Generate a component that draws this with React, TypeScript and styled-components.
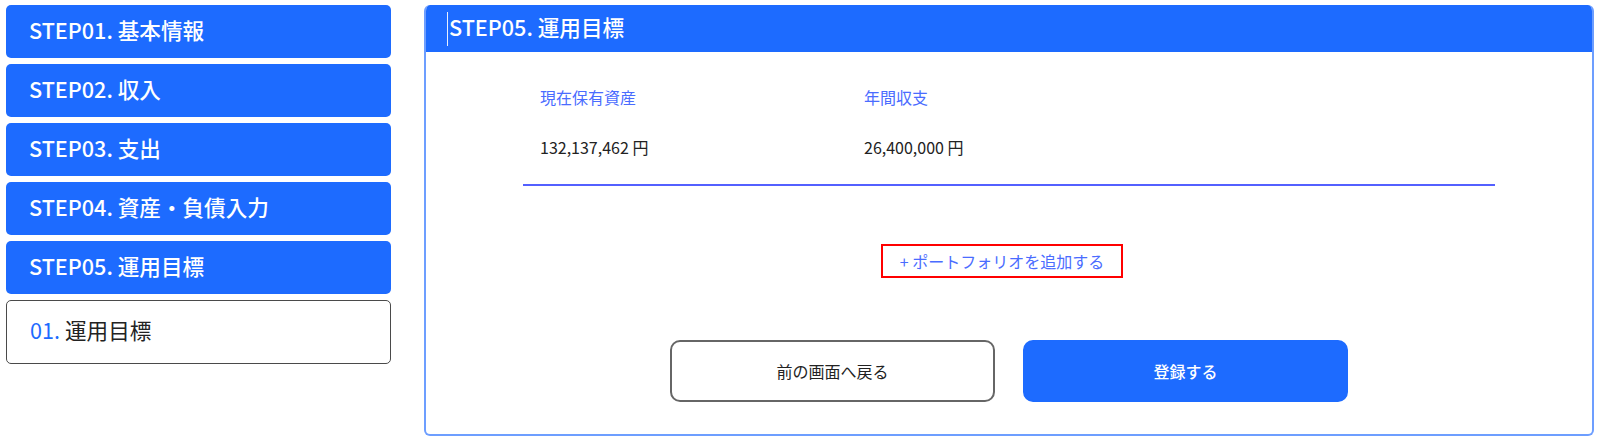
import React from 'react';
import styled, { createGlobalStyle } from 'styled-components';

const GlobalStyle = createGlobalStyle`
  html, body {
    margin: 0;
    padding: 0;
    background: #ffffff;
  }
  body {
    font-family: 'Noto Sans CJK JP', 'Noto Sans', sans-serif;
    color: #222222;
  }
`;

const Page = styled.div`
  display: flex;
  align-items: flex-start;
  gap: 33px;
  padding: 5px 6px;
`;

const Sidebar = styled.nav`
  width: 385px;
  flex-shrink: 0;
  display: flex;
  flex-direction: column;
  gap: 6px;
`;

const StepItem = styled.div`
  height: 53px;
  box-sizing: border-box;
  display: flex;
  align-items: center;
  padding: 0 0 4px 23px;
  background: #1d6bff;
  border-radius: 5px;
  color: #ffffff;
  font-size: 21.6px;
  font-weight: 500;
`;

const SubItem = styled.div`
  height: 64px;
  box-sizing: border-box;
  display: flex;
  align-items: center;
  padding: 0 0 6px 23px;
  border: 1.5px solid #4a4a4a;
  border-radius: 5px;
  font-size: 21.6px;
  color: #222222;
`;

const SubNo = styled.span`
  color: #1d6bff;
  margin-right: 5px;
`;

const Panel = styled.section`
  flex: 1;
  border: 2px solid #6d9eff;
  border-top: none;
  border-radius: 6px;
  overflow: hidden;
`;

const PanelHeader = styled.header`
  height: 47px;
  box-sizing: border-box;
  display: flex;
  align-items: center;
  padding: 0 0 4px 21px;
  background: #1d6bff;
  color: #ffffff;
  font-size: 21.6px;
  font-weight: 500;
`;

const Caret = styled.span`
  width: 1px;
  height: 34px;
  margin: 4px 1px 0 0;
  background: #e8efff;
`;

const PanelBody = styled.div`
  padding: 33px 0 32px;
  display: flex;
  flex-direction: column;
  align-items: center;
`;

const Summary = styled.div`
  align-self: stretch;
  margin: 0 97px;
  padding: 0 0 25px 17px;
  border-bottom: 2px solid #5360ff;
  display: grid;
  grid-template-columns: 324px 324px;
  row-gap: 26px;
`;

const Label = styled.div`
  font-size: 16px;
  line-height: 24px;
  color: #4a6cff;
`;

const Value = styled.div`
  font-size: 16px;
  line-height: 24px;
  color: #222222;
`;

const AddLink = styled.button`
  margin-top: 58px;
  height: 34px;
  padding: 0 17px;
  border: 2px solid #ff0000;
  background: #ffffff;
  color: #4a6cff;
  font-family: inherit;
  font-size: 16px;
  cursor: pointer;
  transform: translateX(-7px);
`;

const Actions = styled.div`
  margin-top: 62px;
  display: flex;
  gap: 28px;
`;

const ActionButton = styled.button<{ $primary?: boolean }>`
  width: 325px;
  height: 62px;
  box-sizing: border-box;
  border-radius: 10px;
  border: 2px solid ${p => (p.$primary ? '#1d6bff' : '#666666')};
  background: ${p => (p.$primary ? '#1d6bff' : '#ffffff')};
  color: ${p => (p.$primary ? '#ffffff' : '#222222')};
  font-family: inherit;
  font-size: 16px;
  font-weight: ${p => (p.$primary ? 500 : 400)};
  cursor: pointer;
`;

const steps = [
  'STEP01. 基本情報',
  'STEP02. 収入',
  'STEP03. 支出',
  'STEP04. 資産・負債入力',
  'STEP05. 運用目標',
];

export default function App() {
  return (
    <>
      <GlobalStyle />
      <Page>
        <Sidebar>
          {steps.map(s => (
            <StepItem key={s}>{s}</StepItem>
          ))}
          <SubItem>
            <SubNo>01.</SubNo>運用目標
          </SubItem>
        </Sidebar>

        <Panel>
          <PanelHeader>
            <Caret />
            STEP05. 運用目標
          </PanelHeader>
          <PanelBody>
            <Summary>
              <Label>現在保有資産</Label>
              <Label>年間収支</Label>
              <Value>132,137,462 円</Value>
              <Value>26,400,000 円</Value>
            </Summary>
            <AddLink>+ ポートフォリオを追加する</AddLink>
            <Actions>
              <ActionButton>前の画面へ戻る</ActionButton>
              <ActionButton $primary>登録する</ActionButton>
            </Actions>
          </PanelBody>
        </Panel>
      </Page>
    </>
  );
}
